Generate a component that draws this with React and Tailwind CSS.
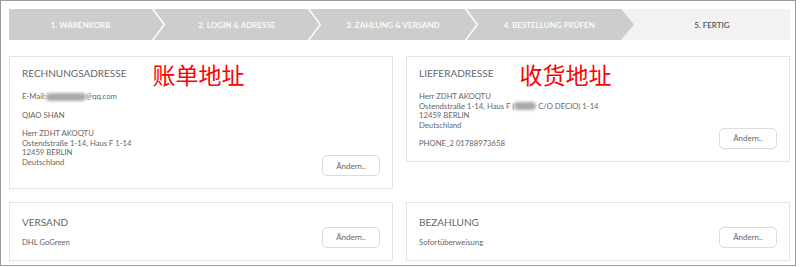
import React from 'react';

const steps = ['1. WARENKORB', '2. LOGIN & ADRESSE', '3. ZAHLUNG & VERSAND', '4. BESTELLUNG PRÜFEN', '5. FERTIG'];

const Step = ({ label, i }) => {
    const active = i === 4;
    return (
        <div className={`flex flex-1 h-full ${active ? 'bg-[#f2f2f2]' : 'bg-[#cdcdcd]'}`}>
            <div className={`flex-1 flex items-center justify-center text-[8px] font-semibold ${active ? 'text-[#555]' : 'text-white'}`}>
                {label}
            </div>
            {i < 3 && (
                <svg width="13" height="31" viewBox="0 0 13 31" className="shrink-0">
                    <polyline points="0,-1 12.3,15.5 0,32" fill="none" stroke="#fff" strokeWidth="1.5" />
                </svg>
            )}
            {i === 3 && (
                <svg width="13" height="31" viewBox="0 0 13 31" className="shrink-0">
                    <rect x="0" y="0" width="13" height="31" fill="#f2f2f2" />
                    <polygon points="0,0 13,15.5 0,31" fill="#cdcdcd" />
                </svg>
            )}
        </div>
    );
};

const Blur = ({ w }) => (
    <span className={`inline-block ${w} h-[8px] bg-[#a9a9a9] rounded-full blur-[1.5px] align-middle`} />
);

const Button = () => (
    <button className="shrink-0 self-end w-[58px] h-[21px] border border-[#dcdcdc] rounded-[5px] bg-white text-[8px] text-[#666]">
        Ändern..
    </button>
);

const Title = ({ children, note }) => (
    <div className="flex items-center h-[24px]">
        <span className="text-[10px] text-[#666]">{children}</span>
        {note && (
            <span className="ml-[26px] text-[23px] leading-none text-[#ff0000] font-['Noto_Sans_CJK_SC',sans-serif]">
                {note}
            </span>
        )}
    </div>
);

export default function App() {
    return (
        <div className="w-[796px] h-[266px] border border-[#9a9a9a] bg-white font-['Lato',sans-serif] pl-[8px] pt-[8px]">
            <div className="w-[781px]">
                <div className="flex h-[31px]">
                    {steps.map((s, i) => (
                        <Step key={s} label={s} i={i} />
                    ))}
                </div>

                <div className="grid grid-cols-2 gap-x-[13px] gap-y-[13px] mt-[16px] items-start">
                    <div className="flex border border-[#e3e3e3] pl-[12px] pr-[12px] pt-[5px] pb-[12px]">
                        <div className="flex-1 text-[7.7px] leading-[9.5px] text-[#666]">
                            <Title note="账单地址">RECHNUNGSADRESSE</Title>
                            <div className="mt-[6px] flex items-center">
                                E-Mail:<Blur w="w-[40px]" />@qq.com
                            </div>
                            <div className="mt-[9px]">QIAO SHAN</div>
                            <div className="mt-[9px] mb-[9px]">
                                <div>Herr ZDHT AKOQTU</div>
                                <div>Ostendstraße 1-14, Haus F 1-14</div>
                                <div>12459 BERLIN</div>
                                <div>Deutschland</div>
                            </div>
                        </div>
                        <Button />
                    </div>

                    <div className="flex border border-[#e3e3e3] pl-[12px] pr-[12px] pt-[5px] pb-[12px]">
                        <div className="flex-1 text-[7.7px] leading-[9.5px] text-[#666]">
                            <Title note="收货地址">LIEFERADRESSE</Title>
                            <div className="mt-[6px] mb-[9px]">
                                <div>Herr ZDHT AKOQTU</div>
                                <div className="flex items-center">
                                    Ostendstraße 1-14, Haus F (<Blur w="w-[22px]" />&nbsp;C/O DECIO) 1-14
                                </div>
                                <div>12459 BERLIN</div>
                                <div>Deutschland</div>
                            </div>
                            <div>PHONE_2 01788973658</div>
                        </div>
                        <Button />
                    </div>

                    <div className="flex border border-[#e3e3e3] pl-[12px] pr-[12px] pt-[12px] pb-[12px]">
                        <div className="flex-1 text-[7.7px] leading-[9.5px] text-[#666]">
                            <div className="text-[10px] leading-[14px]">VERSAND</div>
                            <div className="mt-[9px]">DHL GoGreen</div>
                        </div>
                        <Button />
                    </div>

                    <div className="flex border border-[#e3e3e3] pl-[12px] pr-[12px] pt-[12px] pb-[12px]">
                        <div className="flex-1 text-[7.7px] leading-[9.5px] text-[#666]">
                            <div className="text-[10px] leading-[14px]">BEZAHLUNG</div>
                            <div className="mt-[9px]">Sofortüberweisung</div>
                        </div>
                        <Button />
                    </div>
                </div>
            </div>
        </div>
    );
}
